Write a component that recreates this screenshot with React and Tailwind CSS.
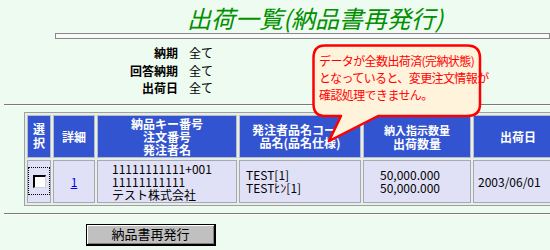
import React from "react";

function Bubble() {
  return (
    <div className="absolute left-[312px] top-[44px] w-[172px] h-[102px] z-10">
      <svg width="172" height="102" viewBox="0 0 172 102" className="absolute inset-0">
        <path
          d="M13 1.5 H155 Q168 1.5 168 14 V60 Q168 72 155 72 H66 L17 97 L29 72 H13 Q1.5 72 1.5 60 V14 Q1.5 1.5 13 1.5 Z"
          fill="#fff3dc"
          stroke="#ff0000"
          strokeWidth="2.5"
          strokeLinejoin="round"
        />
      </svg>
      <div className="absolute left-[7px] top-[8px] text-[12px] leading-[17px] tracking-[-0.6px] text-[#ff0000] whitespace-nowrap">
        データが全数出荷済(完納状態)
        <br />
        となっていると、変更注文情報が
        <br />
        確認処理できません。
      </div>
    </div>
  );
}

function App() {
  const th = "bg-[#3354d0] text-white font-bold text-[12px] leading-[13px] text-center align-middle border border-[#b8bcc8] p-0 h-[43px]";
  const td = "bg-[#e0e0f6] text-[12px] leading-[13px] align-middle border border-[#a8a8b4] p-0 h-[43px] whitespace-nowrap";

  return (
    <div className="relative w-[550px] h-[250px] overflow-hidden bg-[#eefbf0] text-black font-['Noto_Sans_CJK_JP','Noto_Sans',sans-serif]">
      <h1 className="pl-[187px] pt-[6px] h-[33px] text-[24px] leading-[24px] italic font-normal text-[#009000] whitespace-nowrap">
        出荷一覧(納品書再発行)
      </h1>
      <div className="ml-[55px] h-[6px] border border-[#888888] bg-[#fafafa]" />

      <div className="mt-[5px] grid grid-cols-[178px_auto] gap-x-[11px] text-[12px] leading-[17.5px]">
        <div className="text-right font-bold">納期</div>
        <div>全て</div>
        <div className="text-right font-bold">回答納期</div>
        <div>全て</div>
        <div className="text-right font-bold">出荷日</div>
        <div>全て</div>
      </div>

      <div className="mt-[7px] ml-[4px] border-t border-[#7a7a7a] border-b border-b-white" />

      <table className="mt-[6px] ml-[24px] table-fixed w-[542px] border-separate border-spacing-[2px] border border-[#a0a0a0] bg-[#e6eee8]">
        <thead>
          <tr>
            <th className={`${th} w-[24px] leading-[14px]`}>
              選<br />択
            </th>
            <th className={`${th} w-[42px]`}>詳細</th>
            <th className={`${th} w-[140px]`}>
              納品キー番号
              <br />
              注文番号
              <br />
              発注者名
            </th>
            <th className={`${th} w-[122px]`}>
              発注者品名コード
              <br />
              品名(品名仕様)
            </th>
            <th className={`${th} w-[108px]`}>
              <span className="text-[11px]">納入指示数量</span>
              <br />
              出荷数量
            </th>
            <th className={`${th} w-[90px]`}>出荷日</th>
          </tr>
        </thead>
        <tbody>
          <tr>
            <td className={`${td} text-center`}>
              <span className="inline-flex items-center justify-center w-[22px] h-[28px] border border-dotted border-black align-middle">
                <span className="w-[13px] h-[13px] bg-white border-t-2 border-l-2 border-black border-r border-b border-r-[#d0d0d0] border-b-[#d0d0d0]" />
              </span>
            </td>
            <td className={`${td} text-center`}>
              <a href="#" className="text-[#0000ee] underline">1</a>
            </td>
            <td className={`${td} pl-[14px]`}>
              11111111111+001
              <br />
              11111111111
              <br />
              テスト株式会社
            </td>
            <td className={`${td} pl-[6px]`}>
              TEST[1]
              <br />
              TESTﾋﾝ[1]
            </td>
            <td className={`${td} pl-[16px]`}>
              50,000.000
              <br />
              50,000.000
            </td>
            <td className={`${td} pl-[4px]`}>2003/06/01</td>
          </tr>
        </tbody>
      </table>

      <div className="mt-[7px] ml-[4px] border-t border-[#7a7a7a] border-b border-b-white" />

      <button className="mt-[9px] ml-[86px] w-[130px] h-[22px] bg-[#c0c0c0] border border-black border-r-2 border-b-2 shadow-[inset_1px_1px_0_#ffffff,inset_-1px_-1px_0_#808080] text-[13px] leading-[18px] text-black">
        納品書再発行
      </button>

      <Bubble />
    </div>
  );
}

export default App;
